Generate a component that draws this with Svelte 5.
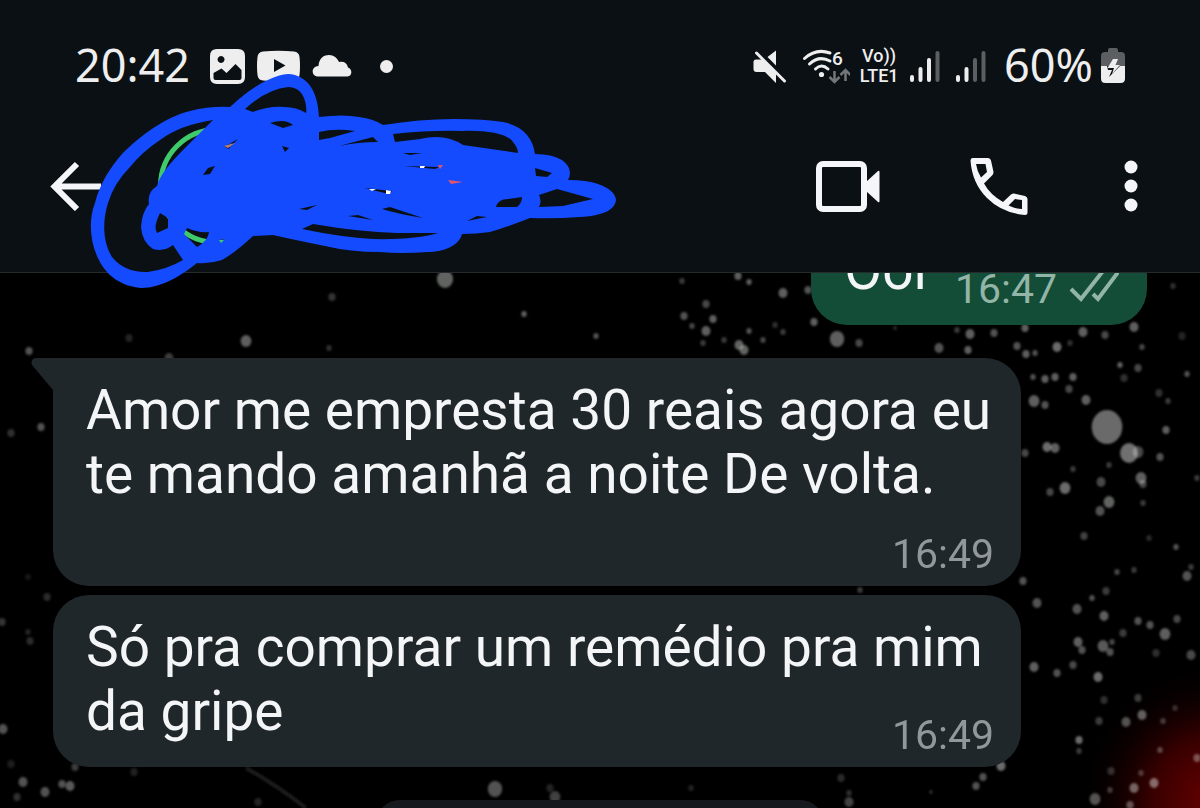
<script lang="ts">
    type Message = { text: string; time: string; first: boolean };

    const messages: Message[] = [
        {
            text: 'Amor me empresta 30 reais agora eu te mando amanhã a noite De volta.',
            time: '16:49',
            first: true
        },
        { text: 'Só pra comprar um remédio pra mim da gripe', time: '16:49', first: false }
    ];

    // Wallpaper stars: x, y, radius, brightness
    const stars: number[][] = [
        [445, 279, 9, 0.42], [332, 297, 4, 0.22], [246, 341, 6, 0.4], [169, 358, 5, 0.25], [93, 368, 4, 0.25],
        [29, 351, 4, 0.35], [41, 427, 4, 0.35], [11, 433, 4, 0.2], [524, 314, 3, 0.4], [596, 336, 3, 0.35],
        [583, 363, 3, 0.25], [129, 338, 4, 0.15], [130, 363, 3, 0.18], [155, 374, 3, 0.18], [329, 348, 3, 0.2],
        [340, 397, 3, 0.25], [634, 397, 3, 0.25], [682, 281, 3, 0.25], [738, 276, 4, 0.4], [749, 282, 3, 0.4],
        [783, 293, 5, 0.4], [808, 290, 4, 0.35], [706, 304, 4, 0.3], [684, 316, 4, 0.35], [713, 319, 4, 0.4],
        [692, 326, 3, 0.3], [706, 331, 5, 0.4], [749, 331, 3, 0.35], [775, 325, 3, 0.2], [783, 332, 3, 0.25],
        [814, 322, 4, 0.4], [837, 339, 8, 0.4], [739, 345, 5, 0.42], [744, 350, 5, 0.42], [763, 340, 3, 0.3],
        [724, 340, 3, 0.25], [859, 343, 4, 0.3], [703, 343, 3, 0.25], [895, 328, 2, 0.2], [970, 334, 5, 0.4],
        [957, 330, 3, 0.25], [994, 333, 4, 0.35], [1025, 328, 4, 0.4], [1083, 332, 5, 0.4], [1105, 335, 4, 0.3],
        [1134, 327, 5, 0.4], [939, 348, 5, 0.35], [968, 350, 4, 0.4], [1017, 346, 4, 0.35], [1057, 347, 5, 0.45],
        [1026, 354, 4, 0.4], [1035, 353, 3, 0.35], [1142, 347, 3, 0.3], [1070, 343, 3, 0.2], [1173, 286, 3, 0.2],
        [1182, 336, 4, 0.15], [1120, 365, 3, 0.4], [1138, 368, 4, 0.3], [1124, 378, 4, 0.2], [1187, 374, 3, 0.35],
        [1033, 377, 3, 0.35], [1045, 379, 4, 0.4], [1055, 377, 4, 0.4], [1073, 377, 4, 0.4], [1069, 389, 4, 0.3],
        [1034, 401, 6, 0.4], [1045, 405, 4, 0.35], [1086, 400, 5, 0.4], [1159, 393, 4, 0.2], [1168, 401, 3, 0.25],
        [1107, 427, 17, 0.45], [1129, 453, 10, 0.48], [1138, 452, 6, 0.3], [1166, 430, 4, 0.4],
        [1160, 457, 4, 0.35], [1047, 447, 5, 0.45], [1055, 448, 5, 0.4], [1025, 453, 4, 0.3], [1073, 469, 3, 0.25],
        [1141, 478, 6, 0.4], [1143, 484, 4, 0.3], [1101, 482, 5, 0.3], [1109, 465, 3, 0.25], [1065, 488, 6, 0.45],
        [1050, 492, 4, 0.3], [1109, 502, 6, 0.42], [1100, 511, 5, 0.35], [1143, 503, 3, 0.25], [1197, 478, 3, 0.25],
        [1084, 536, 4, 0.28], [1149, 538, 3, 0.18], [1176, 547, 3, 0.35], [1191, 567, 3, 0.25], [1187, 576, 5, 0.35],
        [1117, 572, 3, 0.3], [1134, 570, 3, 0.25], [1106, 591, 4, 0.25], [1023, 581, 4, 0.35], [1037, 603, 5, 0.35],
        [1092, 598, 3, 0.35], [1077, 609, 5, 0.35], [1104, 616, 5, 0.4], [1138, 621, 4, 0.35], [1150, 625, 4, 0.35],
        [1165, 634, 6, 0.4], [1123, 633, 4, 0.25], [1177, 619, 4, 0.3], [1078, 642, 5, 0.4], [1082, 650, 4, 0.35],
        [1103, 646, 6, 0.38], [1110, 652, 4, 0.35], [1112, 642, 3, 0.3], [1191, 655, 5, 0.3], [1156, 653, 4, 0.2],
        [1034, 667, 5, 0.4], [1057, 673, 4, 0.35], [1073, 665, 4, 0.3], [1098, 677, 5, 0.45], [1104, 700, 4, 0.2],
        [1138, 698, 4, 0.25], [1142, 715, 5, 0.4], [1126, 722, 5, 0.35], [1175, 708, 3, 0.2], [1099, 721, 4, 0.25],
        [1163, 721, 3, 0.25], [1079, 740, 4, 0.45], [1079, 751, 3, 0.25], [1001, 766, 5, 0.45], [983, 777, 4, 0.35],
        [976, 786, 4, 0.35], [1095, 799, 6, 0.35], [1134, 788, 5, 0.42], [1154, 783, 5, 0.45], [1110, 790, 3, 0.25],
        [1130, 805, 4, 0.35], [1111, 771, 4, 0.2], [1141, 773, 3, 0.25], [1160, 750, 3, 0.3], [1197, 758, 4, 0.35],
        [931, 792, 2, 0.2], [849, 802, 5, 0.28], [849, 793, 3, 0.2], [841, 778, 4, 0.18], [495, 789, 8, 0.35],
        [555, 797, 6, 0.28], [550, 788, 4, 0.15], [691, 788, 3, 0.15], [23, 782, 5, 0.35], [45, 792, 5, 0.35],
        [62, 784, 4, 0.35], [70, 786, 5, 0.38], [75, 767, 4, 0.25], [17, 797, 4, 0.2], [11, 764, 4, 0.12],
        [134, 772, 4, 0.14], [258, 802, 4, 0.15], [3, 729, 5, 0.35], [2, 622, 4, 0.22], [47, 597, 4, 0.18],
        [30, 641, 4, 0.18], [28, 632, 3, 0.15], [28, 577, 3, 0.1], [860, 590, 3, 0.25]
    ];
</script>

<main class="phone">
    <header class="top">
        <div class="status">
            <div class="status-left">
                <span class="clock">20:42</span>
                <svg width="35" height="35" viewBox="0 0 35 35">
                    <path fill="#eee" fill-rule="evenodd" d="M7 0h21q7 0 7 7v21q0 7-7 7H7q-7 0-7-7V7q0-7 7-7z M11 7a3.500 3.500 0 1 0 .1 0z M3.500 24l8-4.500 5 4.500L25.500 15l6 6v8q0 2-2 2h-24q-2 0-2-2z" />
                </svg>
                <svg width="43" height="32" viewBox="0 0 43 32">
                    <path fill="#eee" fill-rule="evenodd" d="M6 1.500Q21 0 37 1.500 42 2 42.500 7 43.500 16 42.500 25 42 30 37 30.500 21 32 6 30.500 1 30 .5 25-.5 16 .5 7 1 2 6 1.500z M17 9v13l11.500-6.500z" />
                </svg>
                <svg width="40" height="24" viewBox="0 0 40 24">
                    <path fill="#eee" d="M5 22.500c-6-1-6-10 1.500-10.500C7 4 12 1 17 1c5 0 8 3 10 7 5-1 8 1 9 5.500 5 2 4 9-.5 9z" />
                </svg>
                <span class="dot"></span>
            </div>
            <div class="status-right">
                <svg width="48" height="40" viewBox="0 0 48 40" fill="#eee">
                    <path d="M30 4.500v15L21.500 11z M10 13.500h7L30 27v10L19 26h-8.500Q7.500 26 7.500 23v-7q0-2.500 2.500-2.500z" />
                    <path d="M10.500 7L38.500 35" stroke="#eee" stroke-width="3" stroke-linecap="round" />
                </svg>
                <svg width="48" height="40" viewBox="0 0 48 40" fill="none">
                    <g stroke="#eee" stroke-width="3" stroke-linecap="round">
                        <path d="M2.500 12.500Q14 2 28 7M7.500 18Q17 9 28 15M13.500 23Q19.500 17 26 23" />
                    </g>
                    <circle cx="19.500" cy="28.500" r="2.600" fill="#eee" />
                    <text x="30" y="19" class="wifi-six">6</text>
                    <path stroke="#74777a" stroke-width="2.500" d="M32.500 25v11M27.500 31l5 5 5-5M43.500 35V24M38.500 29l5-5 5 5" />
                </svg>
                <span class="volte"><span>Vo))</span><span>LTE1</span></span>
                <svg width="36" height="36" viewBox="0 0 36 36" stroke-width="4" stroke-linecap="round">
                    <path stroke="#eee" d="M4 29v3M12.500 21v11M21 12v20" />
                    <path stroke="#5c5f61" d="M29.500 5v27" />
                </svg>
                <svg width="42" height="36" viewBox="0 0 42 36" stroke-width="4" stroke-linecap="round">
                    <path stroke="#eee" d="M6 29v3M14.500 21v11" />
                    <path stroke="#5c5f61" d="M23 12v20M31.500 5v27" />
                </svg>
                <span class="clock">60%</span>
                <svg width="24" height="36" viewBox="0 0 24 36">
                    <path fill="#5c5f61" d="M7 4V2q0-2 2-2h6q2 0 2 2v2h3q4 0 4 4v12H0V8q0-4 4-4z" />
                    <path fill="#eee" d="M0 18h24v12.500q0 4.500-4.500 4.500h-15Q0 35 0 30.500z" />
                    <path fill="#0b1014" d="M6 18l1 4h4l-3 7 11-11z" />
                    <path fill="#eee" d="M12 11h5l-2.500 6H19l-8 9 2-6H6.500z" />
                </svg>
            </div>
        </div>

        <nav class="toolbar">
            <button class="back" aria-label="Voltar">
                <svg width="51" height="50" viewBox="0 0 51 50" fill="none" stroke="#f5f6fa" stroke-width="6">
                    <path d="M27 3L4.500 25.500 27 48M4.500 25.500H51" />
                </svg>
            </button>
            <button class="avatar" aria-label="Foto do contato"></button>
            <div class="actions">
                <button aria-label="Chamada de vídeo">
                    <svg width="64" height="52" viewBox="0 0 64 52">
                        <rect x="3" y="4" width="45" height="45" rx="4" fill="none" stroke="#f5f6fa" stroke-width="6" />
                        <path fill="#f5f6fa" d="M50 22L62 11q1.500-1 1.500 1v29q0 2-1.500 1L50 31z" />
                    </svg>
                </button>
                <button aria-label="Chamada de voz">
                    <svg width="64" height="58" viewBox="0 0 64 58">
                        <path fill="#f5f6fa" fill-rule="evenodd" d="M4.500 1H20q2.500 0 3 2.500L25.500 15q0 2-1 3L16 26.500Q22 37.500 35 45l8-7.500q1.500-1 3-1L57 39q2.500 1 2.500 3v14q0 2-2.500 2Q34 56 19 41 4 26 2.500 3.500 2.500 1 4.500 1z M8 7q1 7 5 13.500L19 15 17.500 7z M40.500 48.500Q48 52 54 52v-9l-7-1z" />
                    </svg>
                </button>
                <button aria-label="Mais opções">
                    <svg width="20" height="52" viewBox="0 0 20 52" fill="#f5f6fa">
                        <circle cx="11" cy="7" r="6.500" />
                        <circle cx="11" cy="26" r="6.500" />
                        <circle cx="11" cy="45" r="6.500" />
                    </svg>
                </button>
            </div>
        </nav>
    </header>

    <section class="chat">
        <svg class="wallpaper" viewBox="0 273 1200 535" preserveAspectRatio="xMinYMin slice" aria-hidden="true">
            <defs>
                <radialGradient id="glow" gradientUnits="userSpaceOnUse" cx="1215" cy="800" r="140">
                    <stop offset="0" stop-color="#680000" />
                    <stop offset="0.450" stop-color="#380000" />
                    <stop offset="1" stop-color="#000" stop-opacity="0" />
                </radialGradient>
                <filter id="soft"><feGaussianBlur stdDeviation="1.2" /></filter>
            </defs>
            <rect y="272" width="1200" height="536" fill="#000" />
            <rect x="1050" y="640" width="150" height="168" fill="url(#glow)" />
            <g filter="url(#soft)" fill="#e8ebe8">
                {#each stars as [x, y, r, light]}
                    <ellipse cx={x} cy={y} rx={r * 0.9} ry={r} opacity={light} />
                {/each}
                <path d="M246 768Q278 786 306 808" fill="none" stroke="#1b1e1c" stroke-width="4" />
            </g>
        </svg>

        <div class="messages">
            <div class="bubble out">
                <p>Ooi</p>
                <time>16:47</time>
                <svg width="50" height="34" viewBox="0 0 50 34" fill="none" stroke="#93b5a7" stroke-width="4" aria-label="Entregue">
                    <path d="M2 20l10 10L34 2M24 25l5 5L50 2" />
                </svg>
            </div>
            {#each messages as message}
                <div class="bubble in" class:first={message.first}>
                    {#if message.first}
                        <svg class="tail" width="24" height="36" viewBox="0 0 24 36">
                            <path fill="#20272b" d="M24 0H5Q-1 1 1 7L22 32v4h2z" />
                        </svg>
                    {/if}
                    <p>{message.text} <time>{message.time}</time></p>
                </div>
            {/each}
            <div class="next"></div>
        </div>
    </section>

    <!-- Marker scribble that hides the contact -->
    <svg class="scribble" width="640" height="300" viewBox="0 0 640 300" aria-hidden="true">
        <path
            fill="#144bff"
            fill-rule="evenodd"
            d="M230 107C243 95 266 76 288 74C308 75 318 92 319 117Q343 114 359 117Q374 119 383 125Q420 119 453 119Q485 119 503 122C523 126 533 138 535 154Q552 154 562 160Q574 169 568 180Q587 180 598 184Q615 190 616 200C615 211 600 216 580 217Q555 219 530 218Q510 226 490 232Q476 234 462 234C459 246 443 252 428 252Q400 254 380 252Q350 252 325 246Q295 240 273 235L253 236Q236 252 222 260Q210 264 197 263C182 275 162 288 141 288C120 286 107 275 100 262C90 245 88 220 95 203C100 183 110 168 122 154C140 136 165 117 190 111Q210 106 230 107z
            M213 120Q180 125 160 140Q142 152 130 167Q114 183 108 203C102 222 103 243 112 257Q125 273 148 272Q168 269 183 260L173 245Q164 252 153 249Q142 242 141 227Q142 212 149 204Q147 192 157 186Q160 173 183 150z
            M160 213L168 218V228L157 233Q153 227 160 213z
            M187 228Q198 233 209 232Q208 241 197 247L184 234z
            M245 109Q267 89 288 87Q301 87 305 101Q307 108 306 113Q297 107 284 107Q268 106 253 112z
            M270 123Q285 118 293 125L283 128z
            M319 132Q335 128 355 131L330 138 319 140z
            M339 146L373 137 378 142Q358 142 339 146z
            M393 134Q430 130 463 131C487 130 508 134 513 142Q518 148 518 153L463 145Q445 133 420 139L395 142z
            M535 168L552 173 547 177 536 176z
            M539 195L557 189 593 199 563 206 539 207Q542 202 539 195z
            M496 207Q498 199 508 199L522 197Q522 203 517 207z
            M467 221L477 216 487 217z
            M382 209L390 207 423 218Q398 214 382 209z
            M348 216L358 215 373 220z
            M302 229L313 224Q360 232 397 233L438 233Q415 240 373 239Q340 237 302 229z
            M203 175L208 168 215 166 210 174z
            M282 146l7 2-4 4z
            M225 147l7-4-3 6z
            M224 147l14-8-8 8z
            M299 209l18-4-10 5z
            M403 153l19 0-12 2z
            M404 166l35 1-4 2z
            M364 188l28 3-3 3z
            M219 240l6-1-4 4z"
        />
        <path fill="#fff" d="M420 166h5l-1 2h-4zM369 189h7l-4 2zM386 190l5 1-1 3h-4z" />
        <path fill="#e0566d" d="M448 180l15 2-12 2zM438 165h5l-3 4z" />
        <path fill="#b9856a" d="M224 146l11-3-7 5z" />
    </svg>
</main>

<style>
    :global(body) {
        margin: 0;
        background: #000;
    }

    .phone {
        position: relative;
        display: flex;
        flex-direction: column;
        height: 100vh;
        overflow: hidden;
        font-family: Roboto, 'Liberation Sans', sans-serif;
    }

    button {
        display: flex;
        padding: 0;
        border: 0;
        background: none;
        cursor: pointer;
    }

    svg {
        flex: none;
    }

    .top {
        flex: none;
        padding-bottom: 32px;
        border-bottom: 1px solid #252a2d;
        background: #0b1014;
    }

    /* Status bar */
    .status {
        display: flex;
        align-items: center;
        justify-content: space-between;
        height: 132px;
        padding: 0 75px;
        color: #eee;
    }

    .status-left,
    .status-right {
        display: flex;
        align-items: center;
    }

    .status-left {
        gap: 12px;
    }

    .status-right {
        gap: 8px;
    }

    .clock {
        padding-bottom: 2px;
        font-family: 'Noto Sans', sans-serif;
        font-size: 45px;
        line-height: 62px;
    }

    .status-left .clock {
        margin-right: 8px;
    }

    .status-right .clock {
        margin-left: 2px;
    }

    .dot {
        width: 13px;
        height: 13px;
        margin-left: 16px;
        border-radius: 50%;
        background: #eee;
    }

    .wifi-six {
        fill: #eee;
        font: 500 19px Roboto, sans-serif;
    }

    .volte {
        display: flex;
        flex-direction: column;
        align-items: center;
        width: 42px;
        font: 500 18px/20px Roboto, sans-serif;
    }

    /* Chat toolbar */
    .toolbar {
        display: flex;
        align-items: center;
        height: 108px;
        padding: 0 60px 0 50px;
    }

    .avatar {
        box-sizing: border-box;
        width: 118px;
        height: 118px;
        margin-left: 57px;
        border: 5px solid #3fca6b;
        border-radius: 50%;
    }

    .actions {
        display: flex;
        align-items: center;
        gap: 88px;
        margin-left: auto;
    }

    /* Conversation */
    .chat {
        position: relative;
        flex: 1;
        min-height: 0;
        overflow: hidden;
    }

    .wallpaper {
        position: absolute;
        inset: 0;
        width: 100%;
        height: 100%;
    }

    .messages {
        position: relative;
        display: flex;
        flex-direction: column;
        margin-top: -55px;
        padding: 0 53px;
    }

    .bubble {
        position: relative;
        border-radius: 36px;
        color: #f3f5f6;
    }

    .bubble p {
        margin: 0;
        font-size: 55px;
        line-height: 64px;
    }

    .bubble time {
        font-size: 41px;
        line-height: 48px;
    }

    .out {
        display: flex;
        align-self: flex-end;
        align-items: flex-end;
        margin-bottom: 33px;
        padding: 20px 28px 12px 33px;
        background: #144d37;
    }

    .out p {
        align-self: flex-start;
    }

    .out time {
        margin: 27px 12px 0 28px;
        color: #93b5a7;
    }

    .out svg {
        margin-bottom: 10px;
    }

    .in {
        display: flow-root;
        margin: 0 126px 9px 0;
        padding: 20px 27px 8px 33px;
        background: #20272b;
    }

    /* Floats beside the last line when there is room, below it otherwise */
    .in time {
        float: right;
        margin-top: 32px;
        color: #92979a;
    }

    .in.first time {
        margin-top: 24px;
    }

    .first {
        border-top-left-radius: 0;
    }

    .tail {
        position: absolute;
        top: 0;
        left: -22px;
    }

    /* Top edge of the item that comes next */
    .next {
        width: 41%;
        height: 80px;
        margin: 24px auto 0;
        border-radius: 24px;
        background: #15191e;
    }

    .scribble {
        position: absolute;
        top: 0;
        left: 0;
        pointer-events: none;
    }
</style>
